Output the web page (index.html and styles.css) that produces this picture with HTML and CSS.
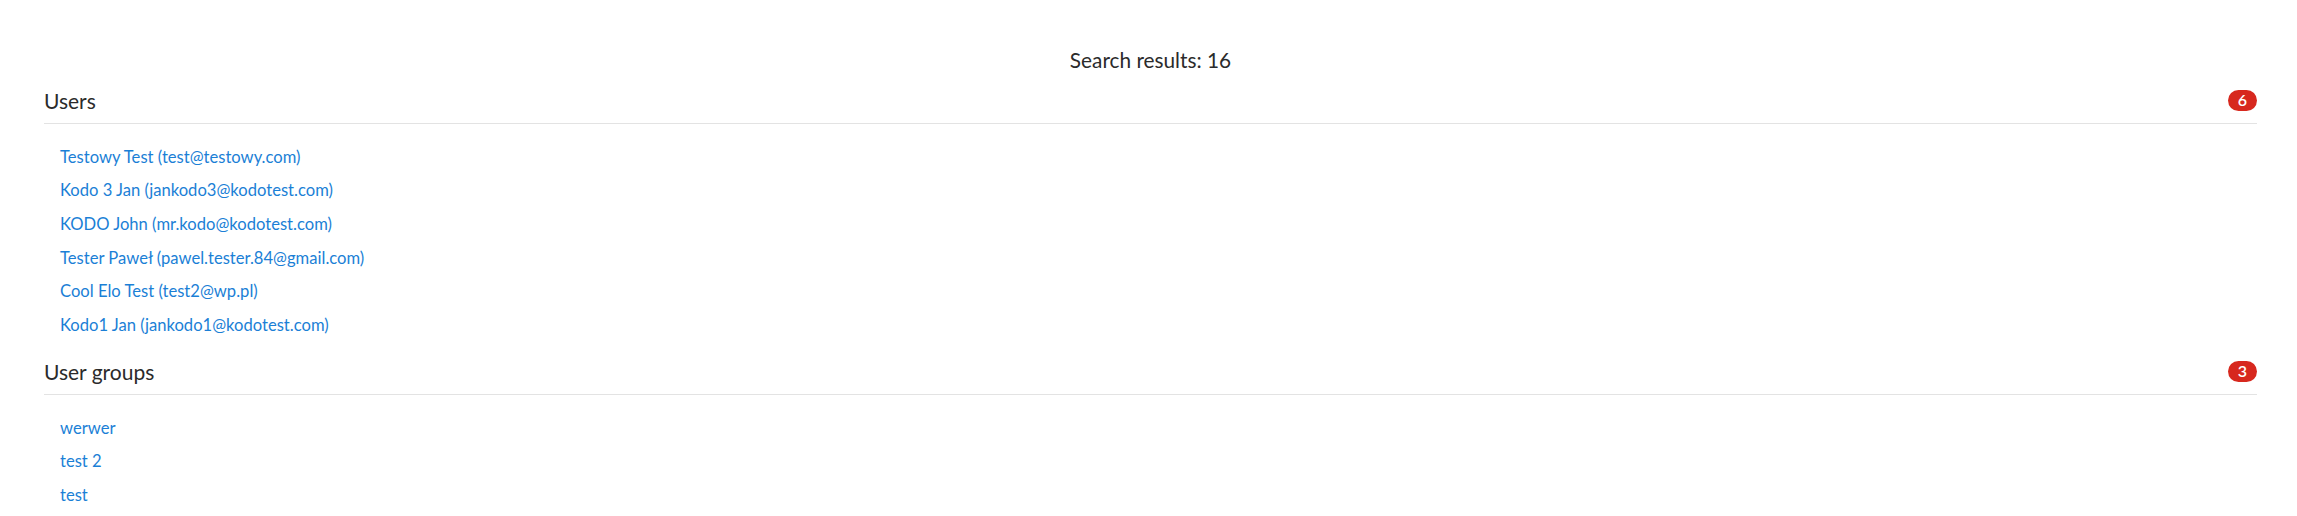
FILE: index.html
```html
<!DOCTYPE html>
<html lang="en">
<head>
<meta charset="utf-8">
<title>Search results</title>
<link rel="stylesheet" href="styles.css">
</head>
<body>
<main class="results">
  <h1 class="summary">Search results: 16</h1>

  <section class="section">
    <header class="section-head">
      <h2 class="section-title">Users</h2>
      <span class="badge">6</span>
    </header>
    <ul class="result-list">
      <li><a href="#">Testowy Test (test@testowy.com)</a></li>
      <li><a href="#">Kodo 3 Jan (jankodo3@kodotest.com)</a></li>
      <li><a href="#">KODO John (mr.kodo@kodotest.com)</a></li>
      <li><a href="#">Tester Paweł (pawel.tester.84@gmail.com)</a></li>
      <li><a href="#">Cool Elo Test (test2@wp.pl)</a></li>
      <li><a href="#">Kodo1 Jan (jankodo1@kodotest.com)</a></li>
    </ul>
  </section>

  <section class="section">
    <header class="section-head">
      <h2 class="section-title">User groups</h2>
      <span class="badge">3</span>
    </header>
    <ul class="result-list">
      <li><a href="#">werwer</a></li>
      <li><a href="#">test 2</a></li>
      <li><a href="#">test</a></li>
    </ul>
  </section>
</main>
</body>
</html>
```

FILE: styles.css
```css
html, body {
  margin: 0;
  padding: 0;
  background: #ffffff;
}

body {
  font-family: "Lato", "Noto Sans", "DejaVu Sans", sans-serif;
  color: #2b2b2b;
}

.results {
  padding: 48px 40px 0 44px;
}

.summary {
  margin: 0;
  text-align: center;
  font-size: 20.8px;
  font-weight: 400;
  line-height: 1.2;
  color: #2b2b2b;
}

.section {
  margin-top: 14.7px;
}

.section + .section {
  margin-top: 16.5px;
}

.section-head {
  display: flex;
  align-items: center;
  justify-content: space-between;
  padding-bottom: 10px;
  border-bottom: 1px solid #e3e3e3;
}

.section-title {
  margin: 0;
  font-size: 21px;
  font-weight: 400;
  line-height: 1.2;
  color: #2b2b2b;
}

.badge {
  display: inline-flex;
  align-items: center;
  justify-content: center;
  min-width: 29px;
  height: 21px;
  box-sizing: border-box;
  padding: 0 8px;
  border-radius: 11px;
  background: #d7281e;
  color: #ffffff;
  font-size: 16px;
  font-weight: 600;
  line-height: 1;
}

.result-list {
  list-style: none;
  margin: 16.9px 0 0;
  padding: 0 0 0 16px;
}

.result-list li {
  font-size: 16.6px;
  line-height: 33.6px;
}

.result-list a {
  color: #1b7fd6;
  text-decoration: none;
}
```
